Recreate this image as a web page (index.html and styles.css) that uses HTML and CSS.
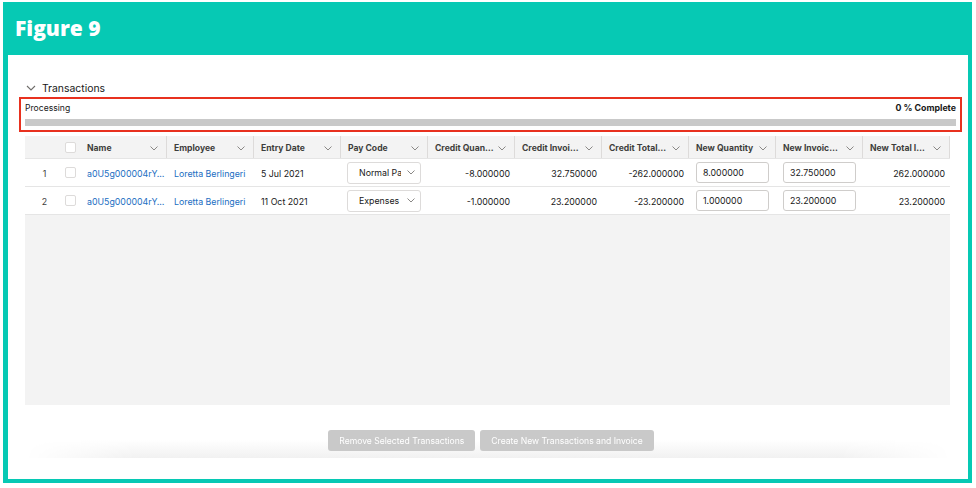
FILE: index.html
```html
<!DOCTYPE html>
<html>
<head>
<meta charset="utf-8">
<link rel="stylesheet" href="styles.css">
</head>
<body>
<div class="frame">
  <div class="title">Figure 9</div>
  <div class="content">
    <div class="section-head">
      <svg class="chev-lg" width="10" height="6" viewBox="0 0 10 6"><polyline points="1,1 5,5 9,1" fill="none" stroke="#706e6b" stroke-width="1.1"/></svg>
      <span>Transactions</span>
    </div>
    <div class="progress-box">
      <div class="progress-labels"><span>Processing</span><span class="pct">0 % Complete</span></div>
      <div class="bar"></div>
    </div>
    <div class="table">
      <div class="grid head">
        <div class="cell"></div>
        <div class="cell cb-cell"><span class="cb"></span></div>
        <div class="cell th">Name<svg class="chev" viewBox="0 0 8 5"><polyline points="0.5,0.5 4,4 7.5,0.5"/></svg></div>
        <div class="cell th">Employee<svg class="chev" viewBox="0 0 8 5"><polyline points="0.5,0.5 4,4 7.5,0.5"/></svg></div>
        <div class="cell th">Entry Date<svg class="chev" viewBox="0 0 8 5"><polyline points="0.5,0.5 4,4 7.5,0.5"/></svg></div>
        <div class="cell th">Pay Code<svg class="chev" viewBox="0 0 8 5"><polyline points="0.5,0.5 4,4 7.5,0.5"/></svg></div>
        <div class="cell th">Credit Quan…<svg class="chev" viewBox="0 0 8 5"><polyline points="0.5,0.5 4,4 7.5,0.5"/></svg></div>
        <div class="cell th">Credit Invoi…<svg class="chev" viewBox="0 0 8 5"><polyline points="0.5,0.5 4,4 7.5,0.5"/></svg></div>
        <div class="cell th">Credit Total…<svg class="chev" viewBox="0 0 8 5"><polyline points="0.5,0.5 4,4 7.5,0.5"/></svg></div>
        <div class="cell th">New Quantity<svg class="chev" viewBox="0 0 8 5"><polyline points="0.5,0.5 4,4 7.5,0.5"/></svg></div>
        <div class="cell th">New Invoic…<svg class="chev" viewBox="0 0 8 5"><polyline points="0.5,0.5 4,4 7.5,0.5"/></svg></div>
        <div class="cell th last">New Total I…<svg class="chev" viewBox="0 0 8 5"><polyline points="0.5,0.5 4,4 7.5,0.5"/></svg></div>
      </div>
      <div class="grid row">
        <div class="cell num">1</div>
        <div class="cell cb-cell"><span class="cb"></span></div>
        <div class="cell link">a0U5g000004rY…</div>
        <div class="cell link">Loretta Berlingeri</div>
        <div class="cell">5 Jul 2021</div>
        <div class="cell"><div class="select"><span class="sel-text">Normal Pay</span><svg class="chev sel-chev" viewBox="0 0 8 5"><polyline points="0.5,0.5 4,4 7.5,0.5"/></svg></div></div>
        <div class="cell right">-8.000000</div>
        <div class="cell right">32.750000</div>
        <div class="cell right">-262.000000</div>
        <div class="cell"><div class="input">8.000000</div></div>
        <div class="cell"><div class="input">32.750000</div></div>
        <div class="cell right">262.000000</div>
      </div>
      <div class="grid row">
        <div class="cell num">2</div>
        <div class="cell cb-cell"><span class="cb"></span></div>
        <div class="cell link">a0U5g000004rY…</div>
        <div class="cell link">Loretta Berlingeri</div>
        <div class="cell">11 Oct 2021</div>
        <div class="cell"><div class="select"><span class="sel-text">Expenses</span><svg class="chev sel-chev" viewBox="0 0 8 5"><polyline points="0.5,0.5 4,4 7.5,0.5"/></svg></div></div>
        <div class="cell right">-1.000000</div>
        <div class="cell right">23.200000</div>
        <div class="cell right">-23.200000</div>
        <div class="cell"><div class="input">1.000000</div></div>
        <div class="cell"><div class="input">23.200000</div></div>
        <div class="cell right">23.200000</div>
      </div>
    </div>
    <div class="footer">
      <button class="btn">Remove Selected Transactions</button>
      <button class="btn">Create New Transactions and Invoice</button>
    </div>
  </div>
</div>
</body>
</html>
```
FILE: styles.css
```css
html, body {
  margin: 0;
  padding: 0;
  background: #ffffff;
}
body {
  width: 976px;
  height: 488px;
  overflow: hidden;
  font-family: Inter, "Liberation Sans", sans-serif;
  color: #181818;
}
.frame {
  margin: 2px 0 0 3px;
  width: 969px;
  height: 481px;
  box-sizing: border-box;
  background: #06c9b4;
  padding: 0 4px 4px 5px;
  display: flex;
  flex-direction: column;
}
.title {
  height: 53px;
  flex: none;
  box-sizing: border-box;
  padding: 11px 0 0 7px;
  color: #ffffff;
  font-family: "Open Sans", sans-serif;
  font-weight: 800;
  font-size: 21px;
  line-height: 30px;
}
.content {
  flex: 1;
  background: #ffffff;
  padding: 26px 6px 0 11px;
  display: flex;
  flex-direction: column;
}
.section-head {
  display: flex;
  align-items: center;
  height: 14px;
  padding-left: 7px;
  font-size: 10.4px;
  color: #181818;
}
.chev-lg {
  margin-right: 6px;
}
.progress-box {
  margin-top: 2px;
  border: 2px solid #e8311f;
  height: 35px;
  box-sizing: border-box;
  padding: 3px 4px 0 4px;
}
.progress-labels {
  display: flex;
  justify-content: space-between;
  font-size: 8.6px;
  line-height: 12px;
  color: #181818;
}
.pct {
  font-weight: 700;
  font-size: 8.8px;
}
.bar {
  margin-top: 5px;
  height: 7px;
  background: #c9c9c9;
}
.table {
  margin: 4px 0 0 6px;
  width: 925px;
  height: 269px;
  background: #f3f3f3;
  flex: none;
}
.grid {
  display: grid;
  grid-template-columns: 33px 22px repeat(10, 87px);
}
.head {
  height: 23px;
  border-bottom: 1px solid #e5e5e5;
  box-sizing: border-box;
}
.row {
  height: 28px;
  background: #ffffff;
  border-bottom: 1px solid #e5e5e5;
  box-sizing: border-box;
}
.cell {
  display: flex;
  align-items: center;
  font-size: 8.8px;
  color: #181818;
  white-space: nowrap;
  overflow: hidden;
  padding: 2px 7px 0 7px;
  box-sizing: border-box;
}
.th {
  font-weight: 700;
  font-size: 8.6px;
  color: #3e3e3c;
  justify-content: space-between;
  border-right: 1px solid #dddbda;
  padding-right: 8px;
}
.cb-cell {
  padding: 0 0 0 7px;
  justify-content: flex-start;
}
.cb {
  width: 11px;
  height: 11px;
  box-sizing: border-box;
  border: 1px solid #dddbda;
  border-radius: 2px;
  background: #ffffff;
}
.num {
  justify-content: center;
  padding: 2px 0 0 6px;
  color: #3e3e3c;
}
.link {
  color: #1b6ec2;
}
.right {
  justify-content: flex-end;
  padding-right: 5px;
}
.chev {
  width: 8px;
  height: 5px;
  flex: none;
  fill: none;
  stroke: #8a8886;
  stroke-width: 1;
}
.select {
  width: 76px;
  height: 22px;
  box-sizing: border-box;
  border: 1px solid #dddbda;
  border-radius: 3px;
  background: #ffffff;
  display: flex;
  align-items: center;
  padding: 0 5px 0 11px;
  margin-left: -1px;
  margin-top: -2px;
}
.sel-text {
  width: 42px;
  overflow: hidden;
  white-space: nowrap;
}
.sel-chev {
  margin-left: auto;
}
.input {
  width: 75px;
  height: 21px;
  box-sizing: border-box;
  border: 1px solid #cfcdcb;
  border-radius: 3px;
  background: #ffffff;
  display: flex;
  align-items: center;
  padding-left: 6px;
  margin-top: -2px;
}
.footer {
  margin-top: 25px;
  height: 28px;
  display: flex;
  justify-content: center;
  gap: 5px;
  padding-left: 6px;
  background: linear-gradient(to bottom, #ffffff 0%, #ffffff 35%, #f1f1f1 100%);
  -webkit-mask-image: linear-gradient(to right, transparent 0%, #000 12%, #000 88%, transparent 100%);
  mask-image: linear-gradient(to right, transparent 0%, #000 12%, #000 88%, transparent 100%);
  width: 920px;
  margin-left: 6px;
}
.btn {
  height: 21px;
  border: none;
  border-radius: 3px;
  background: #c9c9c9;
  color: #ffffff;
  font-family: Inter, "Liberation Sans", sans-serif;
  font-size: 8.6px;
  padding: 0 11px;
}
```
